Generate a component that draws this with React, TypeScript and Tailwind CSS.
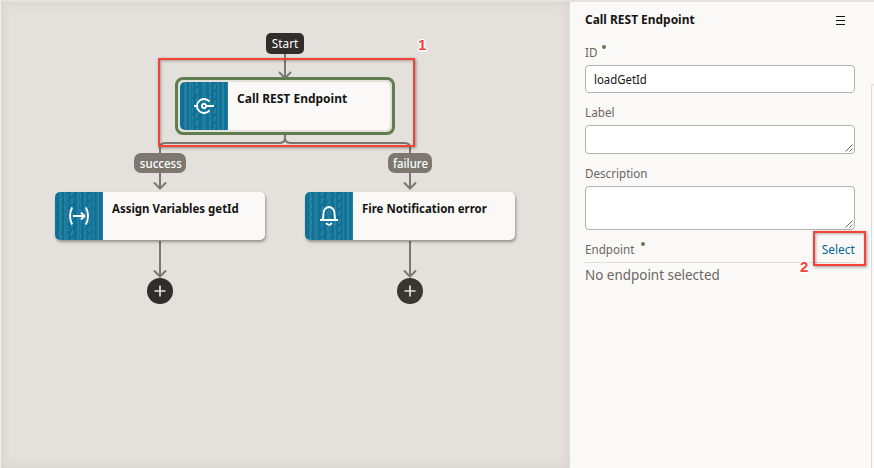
import type { ReactNode } from "react";

const FONT = "font-['Noto_Sans','Open_Sans',sans-serif]";

function T({ className = "", children }: { className?: string; children: ReactNode }) {
  return <span className={`inline-block whitespace-nowrap ${className}`}>{children}</span>;
}

// Brush-stroke texture behind every action icon
const strokes = Array.from({ length: 84 }, (_, i) => {
  const col = i % 12;
  const row = Math.floor(i / 12);
  return {
    x: col * 4.2 + ((row * 3 + col) % 3) * 0.8,
    y: row * 8 + ((col * 5) % 8) - 5,
    h: 4 + ((i * 7) % 4),
    dx: ((i * 3) % 4) - 1.5,
    w: 1.3 + ((i * 5) % 3) * 0.5,
  };
});

function IconTile({ children }: { children: ReactNode }) {
  return (
    <svg width="48" height="48" viewBox="0 0 48 48" className="shrink-0 bg-[#0f7096]">
      <g stroke="#3a8cab" strokeLinecap="round" opacity="0.65">
        {strokes.map((s, i) => (
          <line key={i} x1={s.x} y1={s.y} x2={s.x + s.dx * 0.7} y2={s.y + s.h} strokeWidth={s.w} />
        ))}
      </g>
      <g fill="none" stroke="#fff" strokeWidth="1.9">
        {children}
      </g>
    </svg>
  );
}

function Card({ className, title, icon }: { className: string; title: ReactNode; icon: ReactNode }) {
  return (
    <div className={`flex h-12 w-[210px] overflow-hidden rounded-[5px] bg-[#faf9f8] ${className}`}>
      <IconTile>{icon}</IconTile>
      <div className="pl-[9px] pt-2 text-[12.5px] leading-[18px] font-bold text-[#161513]">{title}</div>
    </div>
  );
}

function AddButton({ className }: { className: string }) {
  return (
    <button className={`absolute top-[278px] flex h-[26px] w-[26px] items-center justify-center rounded-full ${className}`}>
      <svg width="12" height="12" viewBox="0 0 12 12" stroke="#e4e1dd" strokeWidth="1.7">
        <path d="M6 .5v11M.5 6h11" />
      </svg>
    </button>
  );
}

const OUTLINE =
  "[text-shadow:-1.5px_0_#fff,1.5px_0_#fff,0_-1.5px_#fff,0_1.5px_#fff,-1px_-1px_#fff,1px_1px_#fff,-1px_1px_#fff,1px_-1px_#fff]";

function Grip() {
  return (
    <svg width="8" height="8" viewBox="0 0 8 8" className="absolute right-px bottom-px" stroke="#55524e" strokeWidth="0.9">
      <path d="M.5 7.5l7-7M4.5 7.5l3-3" />
    </svg>
  );
}

export default function App() {
  return (
    <div className={`relative flex h-[468px] w-[874px] overflow-hidden border-t-2 border-[#e4e2df] bg-[#faf9f8] ${FONT}`}>
      <main className="h-full w-[569px] shrink-0 border-l border-[#f0efed] bg-[#e4e1dc] shadow-[inset_0_0_12px_rgba(80,75,65,0.11)]">
        <div className="absolute -top-[2px] left-0 h-[468px] w-[569px]">
          <svg className="absolute inset-0" width="569" height="468" fill="none" stroke="#7c7870" strokeWidth="2">
            <path d="M285 53v24M279 72l6 6 6-6" />
            <path d="M285 135v3q0 5-6 5H165q-5 0-5 5v40M285 135v3q0 5 6 5h114q5 0 5 5v40" />
            <path d="M154 182.500l6 6 6-6M404 182.500l6 6 6-6" />
            <path d="M160 241v35M154 270.500l6 6 6-6M410 241v35M404 270.500l6 6 6-6" />
          </svg>

          <div className="absolute left-[266px] top-[33px] flex h-[21px] w-[38px] justify-center rounded-[5px] bg-[#312d2a] pl-px text-[12.5px] leading-[21px] text-white">
            <T className="origin-center scale-x-[.94]">Start</T>
          </div>
          <div className="absolute left-[134px] top-[153px] flex h-5 w-[52px] justify-center rounded-[7px] bg-[#7c7870] pl-px text-[12px] leading-[21px] font-medium text-white">
            <T className="origin-center scale-x-[.96]">success</T>
          </div>
          <div className="absolute left-[388px] top-[153px] flex h-5 w-[44px] justify-center rounded-[7px] bg-[#7c7870] text-[12px] leading-[21px] font-medium text-white">
            <T className="origin-center scale-x-[.95]">failure</T>
          </div>

          <div className="absolute left-[175px] top-[77px] rounded-[8px] border-[3px] border-[#5f7d4f] p-[2px]">
            <Card
              className=""
              title={<T className="origin-left scale-x-[.96]">Call REST Endpoint</T>}
              icon={
                <>
                  <path d="M29.500 19.700A7 7 0 1 0 29.500 28.300M14 24h3" />
                  <circle cx="24" cy="24" r="2.100" />
                  <path d="M26 24h8" />
                </>
              }
            />
          </div>
          <Card
            className="absolute left-[55px] top-[192px] shadow-[1px_2px_3px_rgba(0,0,0,0.35)]"
            title={<T className="origin-left scale-x-[.915]">Assign Variables getId</T>}
            icon={<path d="M17 15.500q-4 8.500 0 17M31 15.500q4 8.500 0 17M18 24h11M26 20.500l3.500 3.500-3.500 3.500" />}
          />
          <Card
            className="absolute left-[305px] top-[192px] shadow-[1px_2px_3px_rgba(0,0,0,0.35)]"
            title={<T className="origin-left scale-x-[.915]">Fire Notification error</T>}
            icon={<path d="M15 28h18M17.500 28c.8-1.500 1-3 1-6.500a5.500 6.500 0 0 1 11 0c0 3.500.2 5 1 6.500M21 31.200q3 3.400 6 0" />}
          />

          <AddButton className="left-[147px] bg-[#312d2a]" />
          <AddButton className="left-[397px] bg-[#3a3632]" />

          <div className="absolute left-[158px] top-[58px] h-[89px] w-[257px] border-2 border-[#f44336] shadow-[1px_1px_3px_rgba(0,0,0,0.4),inset_1px_1px_3px_rgba(0,0,0,0.3)]" />
          <span className={`absolute left-[418px] top-[36px] font-['Liberation_Sans',sans-serif] text-[15px] leading-[18px] font-bold text-[#f44336] ${OUTLINE}`}>1</span>
        </div>
      </main>

      <aside className="relative flex h-full w-[302px] flex-col border-l border-[#e0dedb] pr-[16px] pl-[15px] text-[12.5px] leading-[18px] text-[#6b6762]">
        <header className="mt-[9px] flex h-[18px] items-center justify-between pr-[10px] text-[#161513]">
          <T className="origin-left scale-x-[.955] font-bold">Call REST Endpoint</T>
          <svg width="9" height="9" viewBox="0 0 9 9" stroke="#161513" strokeWidth="1" shapeRendering="crispEdges" className="shrink-0">
            <path d="M0 .5h9M0 4.500h9M0 8.500h9" />
          </svg>
        </header>
        <label className="mt-[15px] flex h-[18px]">
          <T className="origin-left scale-x-[.93]">ID</T>
          <i className="mt-[1px] ml-[4px] h-1 w-1 rounded-full bg-[#5f7d4f]" />
        </label>
        <div className="mt-[3px] flex h-7 w-[270px] shrink-0 items-center rounded-[4px] border border-[#b5b2ae] bg-white pt-px pl-2 text-[#161513]">
          <T className="origin-left scale-x-[.91]">loadGetId</T>
        </div>
        <label className="mt-[11px] h-[18px]"><T className="origin-left scale-x-[.94]">Label</T></label>
        <div className="relative mt-[3px] h-[29px] w-[270px] shrink-0 rounded-[4px] border border-[#b5b2ae] bg-white"><Grip /></div>
        <label className="mt-[11px] h-[18px]"><T className="origin-left scale-x-[.93]">Description</T></label>
        <div className="relative mt-[3px] h-[44px] w-[270px] shrink-0 rounded-[4px] border border-[#b5b2ae] bg-white"><Grip /></div>
        <div className="mt-[11px] flex h-[22px] w-[270px] border-b border-[#e0dedb]">
          <T className="origin-left scale-x-[.93]">Endpoint</T>
          <i className="mt-[1px] ml-[3px] h-1 w-1 rounded-full bg-[#5f7d4f]" />
          <T className="ml-auto origin-right scale-x-[.95] text-[#00688c]">Select</T>
        </div>
        <p className="mt-[2px] text-[14px] leading-[20px]"><T className="origin-left scale-x-[.96]">No endpoint selected</T></p>

        <div className="absolute left-[243px] top-[229px] h-[35px] w-[53px] border-2 border-[#f44336] shadow-[1px_1px_3px_rgba(0,0,0,0.4),inset_1px_1px_3px_rgba(0,0,0,0.3)]" />
        <span className={`absolute left-[230px] top-[256px] font-['Liberation_Sans',sans-serif] text-[15px] leading-[18px] font-bold text-[#f44336] ${OUTLINE}`}>2</span>
      </aside>
      <div className="mt-[82px] flex-1 rounded-tl-[3px] border-t border-l border-[#dedcd9]" />
    </div>
  );
}
